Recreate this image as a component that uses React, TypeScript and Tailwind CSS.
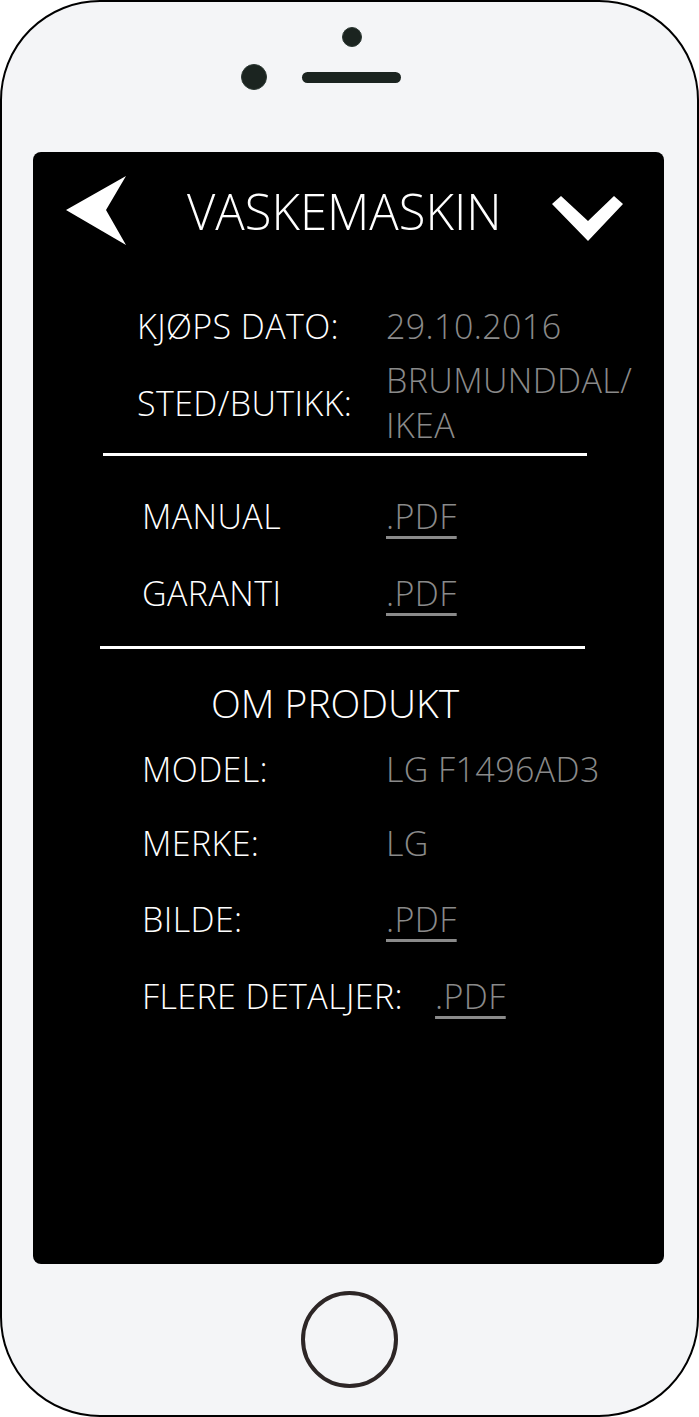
const font = { fontFamily: '"Open Sans", "Noto Sans", sans-serif' };

function Pdf() {
  return (
    <span className="text-[#8a8a8a] underline decoration-[3px] underline-offset-[7px]">.PDF</span>
  );
}

function Row({ label, value, mt, pl, w }: { label: string; value: React.ReactNode; mt: string; pl: string; w: string }) {
  return (
    <div className={`flex h-[44px] items-center ${mt} ${pl}`}>
      <div className={`${w} shrink-0 text-white`}>{label}</div>
      <div className="text-[#8a8a8a]">{value}</div>
    </div>
  );
}

export default function App() {
  return (
    <div className="w-[699px] h-[1417px] bg-white" style={font}>
      <div className="w-[699px] h-[1417px] rounded-[100px] border-2 border-black bg-[#f4f5f7] flex flex-col overflow-hidden">
        {/* Top: camera + speaker */}
        <div className="h-[150px] shrink-0 flex flex-col">
          <div className="mt-[25px] ml-[340px] w-[20px] h-[20px] rounded-full bg-[#1b2420] border border-[#2c3833]" />
          <div className="mt-[17px] ml-[239px] flex items-center">
            <div className="w-[26px] h-[26px] rounded-full bg-[#1b2420] border border-[#2c3833]" />
            <div className="ml-[35px] w-[99px] h-[11px] rounded-full bg-[#1b2420]" />
          </div>
        </div>

        {/* Screen */}
        <div className="ml-[31px] w-[631px] h-[1112px] rounded-[8px] bg-black flex flex-col font-light text-[34px] tracking-[0.4px] leading-[44px]">
          {/* Header */}
          <div className="h-[118px] flex items-center shrink-0">
            <svg width="60" height="70" viewBox="0 0 60 70" className="ml-[33px]">
              <polygon points="0,34 60,0 40,34 60,69" fill="#fff" />
            </svg>
            <div className="ml-[61px] text-white text-[49px] tracking-normal leading-[60px]">VASKEMASKIN</div>
            <svg width="72" height="46" viewBox="0 0 72 46" className="ml-auto mr-[40px] mt-[16px]">
              <polygon points="0,8 9,0 36,25 62,0 71,8 36,45" fill="#fff" />
            </svg>
          </div>

          <Row label="KJØPS DATO:" value="29.10.2016" mt="mt-[34px]" pl="pl-[104px]" w="w-[249px]" />

          <div className="mt-[10px] pl-[104px] flex items-center h-[90px]">
            <div className="w-[249px] shrink-0 text-white">STED/BUTIKK:</div>
            <div className="text-[#8a8a8a] leading-[45px]">
              BRUMUNDDAL/
              <br />
              IKEA
            </div>
          </div>

          <div className="mt-[5px] ml-[70px] w-[484px] h-[3px] bg-white" />

          <Row label="MANUAL" value={<Pdf />} mt="mt-[38px]" pl="pl-[109px]" w="w-[244px]" />
          <Row label="GARANTI" value={<Pdf />} mt="mt-[33px]" pl="pl-[109px]" w="w-[244px]" />

          <div className="mt-[31px] ml-[67px] w-[485px] h-[3px] bg-white" />

          <div className="mt-[29px] h-[50px] flex items-center pl-[178px] text-white text-[39px] tracking-normal">OM PRODUKT</div>

          <Row label="MODEL:" value="LG F1496AD3" mt="mt-[19px]" pl="pl-[109px]" w="w-[244px]" />
          <Row label="MERKE:" value="LG" mt="mt-[30px]" pl="pl-[109px]" w="w-[244px]" />
          <Row label="BILDE:" value={<Pdf />} mt="mt-[32px]" pl="pl-[109px]" w="w-[244px]" />

          <div className="mt-[33px] h-[44px] flex items-center pl-[109px] gap-[32px]">
            <div className="text-white">FLERE DETALJER:</div>
            <Pdf />
          </div>
        </div>

        {/* Home button */}
        <div className="flex-1 flex items-center justify-center">
          <div className="w-[97px] h-[97px] rounded-full border-4 border-[#2d2626]" />
        </div>
      </div>
    </div>
  );
}
